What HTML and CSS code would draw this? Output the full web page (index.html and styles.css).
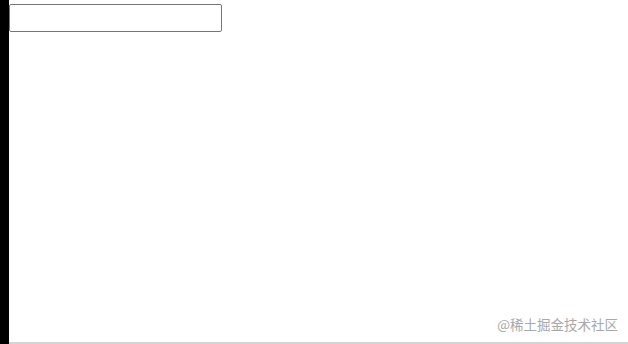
FILE: index.html
```html
<!DOCTYPE html>
<html lang="zh">
<head>
<meta charset="utf-8">
<link rel="stylesheet" href="styles.css">
</head>
<body>
<div class="page">
  <div class="sidebar"></div>
  <main class="main">
    <div class="content">
      <input class="field" type="text">
    </div>
    <div class="watermark">@稀土掘金技术社区</div>
  </main>
</div>
</body>
</html>
```
FILE: styles.css
```css
html, body {
  margin: 0;
  padding: 0;
  background: #fff;
  height: 100%;
}
.page {
  display: flex;
  height: 344px;
  width: 628px;
}
.sidebar {
  width: 9px;
  background: #000;
  flex: none;
}
.main {
  flex: 1;
  position: relative;
  display: flex;
  flex-direction: column;
}
.content {
  flex: 1;
  padding-top: 4px;
  border-bottom: 2px solid #d4d4d4;
}
.field {
  display: block;
  box-sizing: border-box;
  width: 213px;
  height: 28px;
  margin: 0;
  border: 1px solid #767676;
  border-radius: 2px;
  padding: 0 4px;
  font-family: "Liberation Sans", Arial, sans-serif;
  font-size: 13px;
  background: #fff;
  outline: none;
}
.watermark {
  position: absolute;
  right: 10px;
  bottom: 12px;
  font-family: "Noto Sans CJK SC", "Noto Sans", sans-serif;
  font-size: 13.5px;
  line-height: 16px;
  color: #a8a8a8;
}
```
